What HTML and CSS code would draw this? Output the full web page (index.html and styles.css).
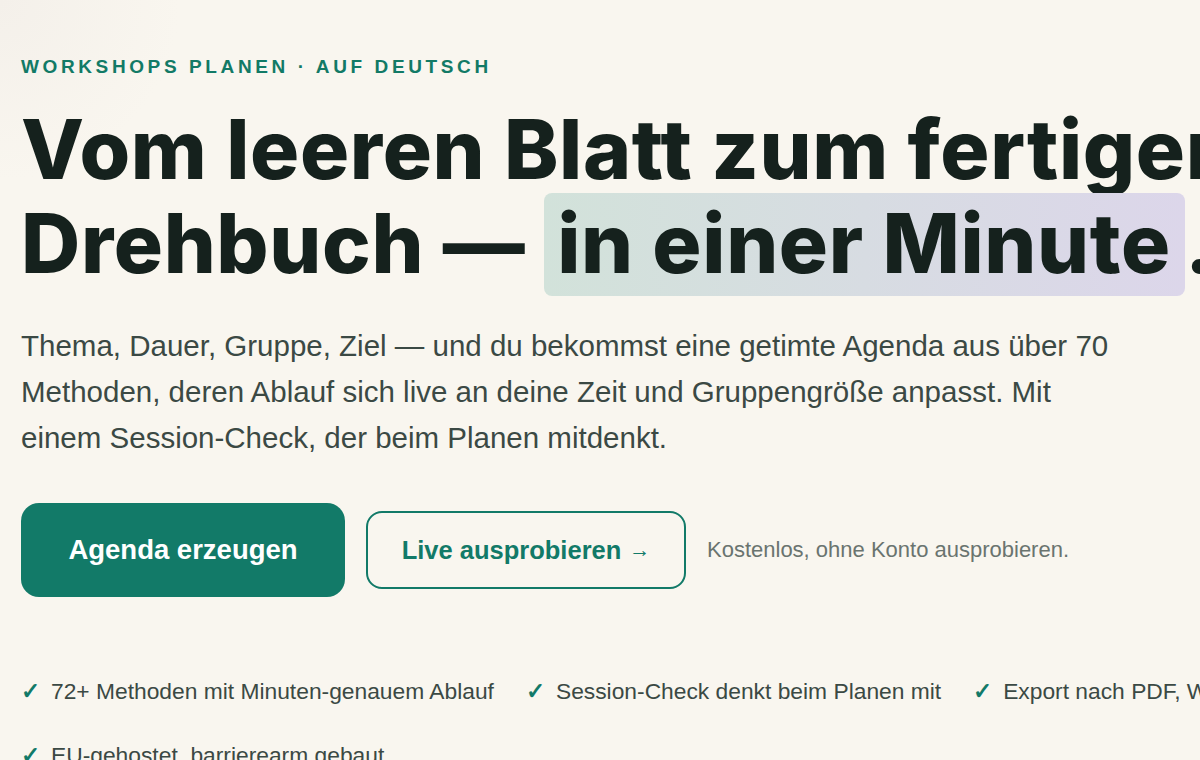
FILE: index.html
```html
<!DOCTYPE html>
<html lang="de">
	<head>
		<meta charset="UTF-8" />
		<meta name="viewport" content="width=device-width, initial-scale=1.0" />
		<title>Workshops planen</title>
		<link rel="stylesheet" href="styles.css">
	</head>
	<body>
		<section class="hero">
			<p class="eyebrow">Workshops planen · auf Deutsch</p>
			<h1 class="headline">
				Vom leeren Blatt zum fertigen<br />
				Drehbuch — <span class="mark">in einer Minute</span>.
			</h1>
			<p class="lead">
				Thema, Dauer, Gruppe, Ziel — und du bekommst eine getimte Agenda aus über 70
				Methoden, deren Ablauf sich live an deine Zeit und Gruppengröße anpasst. Mit
				einem Session-Check, der beim Planen mitdenkt.
			</p>
			<div class="actions">
				<a class="button primary" href="#">Agenda erzeugen</a>
				<a class="button outline" href="#">Live ausprobieren <span class="arrow">→</span></a>
				<span class="note">Kostenlos, ohne Konto ausprobieren.</span>
			</div>
			<ul class="perks">
				<li><span class="tick">✓</span>72+ Methoden mit Minuten-genauem Ablauf</li>
				<li><span class="tick">✓</span>Session-Check denkt beim Planen mit</li>
				<li><span class="tick">✓</span>Export nach PDF, Word und Kalender</li>
				<li><span class="tick">✓</span>EU-gehostet, barrierearm gebaut</li>
			</ul>
		</section>
	</body>
</html>
```

FILE: styles.css
```css
html,
body {
	margin: 0;
	overflow: hidden;
}
body {
	background: radial-gradient(circle at 0 0, #f4f0ea 0, #f9f6ef 180px) #f9f6ef;
	font-family: "Liberation Sans", Arial, sans-serif;
	color: #3b4944;
	height: 760px;
}
.hero {
	padding: 55px 21px 0;
	width: 1400px;
}
.eyebrow {
	margin: 0;
	color: #127a66;
	font-size: 19px;
	font-weight: 700;
	letter-spacing: 0.19em;
	text-transform: uppercase;
	line-height: 24px;
}
.headline {
	margin: 24px 0 0;
	font-family: Inter, "Liberation Sans", sans-serif;
	font-weight: 800;
	font-size: 82px;
	line-height: 94px;
	letter-spacing: 0.008em;
	color: #15211d;
	white-space: nowrap;
}
.mark {
	background: linear-gradient(90deg, #d2e2da, #dcd6ea);
	border-radius: 8px;
	padding: 1px 14px 3px 13px;
}
.lead {
	margin: 32px 0 0;
	max-width: 1100px;
	font-size: 29.5px;
	line-height: 46px;
	color: #3b4944;
}
.actions {
	display: flex;
	align-items: center;
	gap: 21px;
	margin-top: 42px;
}
.button {
	display: inline-flex;
	align-items: center;
	justify-content: center;
	box-sizing: border-box;
	font-weight: 700;
	text-decoration: none;
	border-radius: 16px;
}
.button.primary {
	width: 324px;
	height: 94px;
	background: #127a68;
	color: #fff;
	font-size: 27.5px;
	border-radius: 18px;
}
.button.outline {
	width: 320px;
	height: 78px;
	border: 2px solid #127a68;
	color: #127a68;
	font-size: 25.5px;
}
.arrow {
	font-size: 21px;
	margin-left: 8px;
}
.note {
	font-size: 22px;
	color: #6a746f;
}
.perks {
	display: flex;
	flex-wrap: wrap;
	width: 1400px;
	gap: 30px 32px;
	list-style: none;
	padding: 0;
	margin: 77px 0 0;
	font-size: 22.8px;
	line-height: 34px;
	color: #3b4944;
}
.perks li:last-child {
	flex-basis: 100%;
}
.tick {
	color: #127a68;
	font-weight: 700;
	margin-right: 11px;
}
```
